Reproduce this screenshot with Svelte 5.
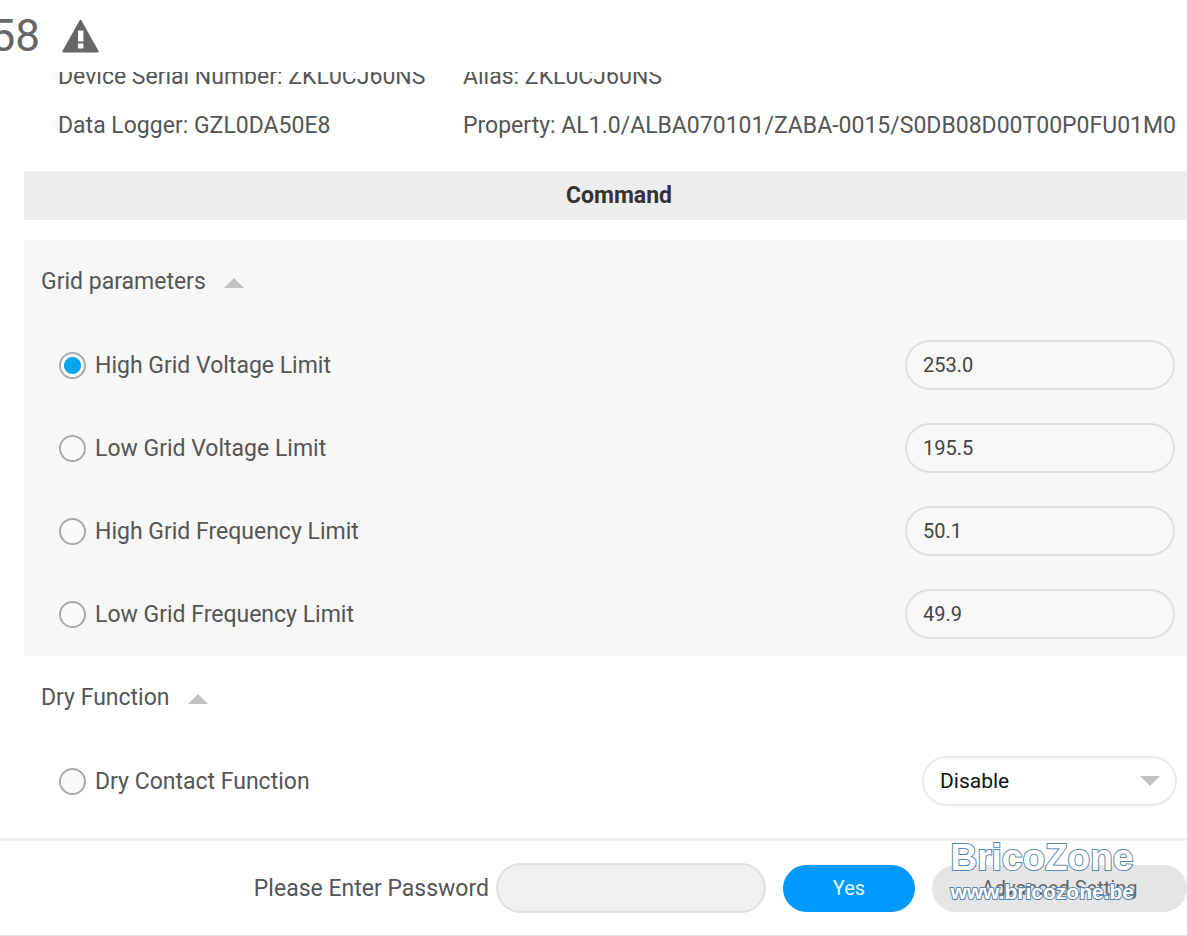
<script lang="ts">
	type Param = {
		id: string;
		label: string;
		value: string;
	};

	const gridParams: Param[] = $state([
		{ id: 'high-voltage', label: 'High Grid Voltage Limit', value: '253.0' },
		{ id: 'low-voltage', label: 'Low Grid Voltage Limit', value: '195.5' },
		{ id: 'high-frequency', label: 'High Grid Frequency Limit', value: '50.1' },
		{ id: 'low-frequency', label: 'Low Grid Frequency Limit', value: '49.9' }
	]);

	let selected = $state('high-voltage');
	let dryContact = $state('Disable');
	let password = $state('');
	let gridOpen = $state(true);
	let dryOpen = $state(true);
</script>

{#snippet arrow(open: boolean)}
	<svg class="arrow" class:closed={!open} width="20" height="10" viewBox="0 0 20 10" aria-hidden="true">
		<path d="M0 10 10 0l10 10z" fill="#c2c2c2" />
	</svg>
{/snippet}

<div class="page">
	<header>
		<h1>58</h1>
		<svg width="38" height="34" viewBox="0 0 38 34" aria-hidden="true">
			<path d="M19.5 1.5 37 32.6H2z" fill="#666" stroke="#666" stroke-width="1.6" stroke-linejoin="round" />
			<path d="M17 11.5h5.4v11H17zM17 24.5h5.4v5H17z" fill="#fff" />
		</svg>
	</header>

	<div class="info">
		<span>Device Serial Number: ZKL0CJ60NS</span>
		<span>Alias: ZKL0CJ60NS</span>
		<span>Data Logger: GZL0DA50E8</span>
		<span>Property: AL1.0/ALBA070101/ZABA-0015/S0DB08D00T00P0FU01M0</span>
	</div>

	<main>
		<h2>Command</h2>

		<section class="shaded">
			<button class="toggle" onclick={() => (gridOpen = !gridOpen)}>
				Grid parameters
				{@render arrow(gridOpen)}
			</button>
			{#if gridOpen}
				{#each gridParams as param (param.id)}
					<div class="row">
						<label>
							<input type="radio" name="command" value={param.id} bind:group={selected} />
							{param.label}
						</label>
						<input class="field" type="text" aria-label={param.label} bind:value={param.value} />
					</div>
				{/each}
			{/if}
		</section>

		<section>
			<button class="toggle" onclick={() => (dryOpen = !dryOpen)}>
				Dry Function
				{@render arrow(dryOpen)}
			</button>
			{#if dryOpen}
				<div class="row select-row">
					<label>
						<input type="radio" name="command" value="dry-contact" bind:group={selected} />
						Dry Contact Function
					</label>
					<div class="select">
						<select aria-label="Dry Contact Function" bind:value={dryContact}>
							<option>Disable</option>
							<option>Enable</option>
						</select>
						{@render arrow(false)}
					</div>
				</div>
			{/if}
		</section>
	</main>

	<footer>
		<label class="password">
			Please Enter Password
			<input class="field" type="password" bind:value={password} />
		</label>
		<button class="btn yes">Yes</button>
		<button class="btn advanced">Advanced Setting</button>
		<div class="watermark">
			<span class="brand">BricoZone</span>
			<span class="site">www.bricozone.be</span>
		</div>
	</footer>
</div>

<style>
	:global(body) {
		margin: 0;
		background: #fff;
	}

	.page {
		overflow: hidden;
		font-family: Roboto, sans-serif;
		font-size: 23px;
		color: #555;
	}

	input,
	select,
	button {
		box-sizing: border-box;
		margin: 0;
		font-family: inherit;
		color: inherit;
	}

	header {
		display: flex;
		align-items: center;
		gap: 21px;
		height: 72px;
	}

	/* number is cut off by the left edge */
	h1 {
		display: flex;
		justify-content: flex-end;
		width: 40px;
		margin: 0;
		overflow: hidden;
		font-size: 44px;
		font-weight: 400;
		line-height: 76px;
		color: #666;
	}

	/* scrolled list, only the end of it shows under the header */
	.info {
		display: grid;
		grid-template-columns: 405px 1fr;
		align-content: end;
		height: 78px;
		padding-left: 58px;
		overflow: hidden;
		line-height: 49px;
		white-space: nowrap;
	}

	main {
		padding: 21px 0 16px 24px;
	}

	h2 {
		margin: 0 0 20px;
		padding-left: 27px;
		background: #ededed;
		font-size: 23px;
		font-weight: 700;
		line-height: 49px;
		text-align: center;
		color: #333;
	}

	.shaded {
		padding-bottom: 1px;
		background: #f7f7f7;
	}

	.toggle {
		display: flex;
		align-items: center;
		gap: 18px;
		height: 83px;
		padding: 0 17px;
		border: 0;
		background: none;
		font-size: 23px;
		cursor: pointer;
	}

	.toggle .arrow {
		margin-top: 3px;
	}

	.arrow.closed {
		transform: rotate(180deg);
	}

	.row {
		display: flex;
		align-items: center;
		justify-content: space-between;
		height: 83px;
		padding: 0 12px 0 35px;
	}

	.select-row {
		padding-right: 10px;
	}

	.row label {
		display: flex;
		align-items: center;
		gap: 9px;
		padding-top: 2px;
	}

	input[type='radio'] {
		appearance: none;
		width: 27px;
		height: 27px;
		border: 2px solid #a9a9a9;
		border-radius: 50%;
		background: #fafafa;
	}

	input[type='radio']:checked {
		background: radial-gradient(circle, #03a5f0 8px, #fff 9px);
	}

	.field {
		width: 270px;
		height: 50px;
		padding: 0 16px;
		border: 2px solid #e0e0e0;
		border-radius: 25px;
		background: #f8f8f8;
		font-size: 20px;
		color: #444;
	}

	.select {
		display: grid;
		align-items: center;
		width: 255px;
	}

	.select > :global(*) {
		grid-area: 1 / 1;
	}

	.select .arrow {
		justify-self: end;
		margin-right: 17px;
		pointer-events: none;
	}

	select {
		appearance: none;
		width: 100%;
		height: 50px;
		padding: 0 16px;
		border: 2px solid #ebebeb;
		border-radius: 25px;
		background: #fff;
		font-size: 21px;
		color: #111;
	}

	footer {
		position: relative;
		display: flex;
		align-items: center;
		justify-content: flex-end;
		gap: 17px;
		height: 94px;
		border-top: 3px solid #f0f0f0;
		border-bottom: 1px solid #e0e0e0;
	}

	.password {
		display: flex;
		align-items: center;
		gap: 7px;
	}

	.password .field {
		background: #f0f0f0;
	}

	.btn {
		height: 47px;
		border: 0;
		border-radius: 24px;
		font-size: 20px;
		cursor: pointer;
	}

	.yes {
		width: 132px;
		background: #0099ff;
		color: #e6f8ff;
	}

	.advanced {
		width: 255px;
		background: #e5e5e5;
		color: #666;
	}

	/* stroke sits behind the fill so the letters stay white inside */
	.watermark {
		position: absolute;
		top: 0;
		right: 53px;
		display: grid;
		font-family: 'Liberation Sans', Arial, sans-serif;
		font-weight: 700;
		color: #fff;
		-webkit-text-stroke: 2px #5a86ab;
		paint-order: stroke fill;
		pointer-events: none;
	}

	.brand {
		font-size: 37px;
		line-height: 34px;
	}

	.site {
		font-size: 21px;
		line-height: 34px;
	}
</style>
